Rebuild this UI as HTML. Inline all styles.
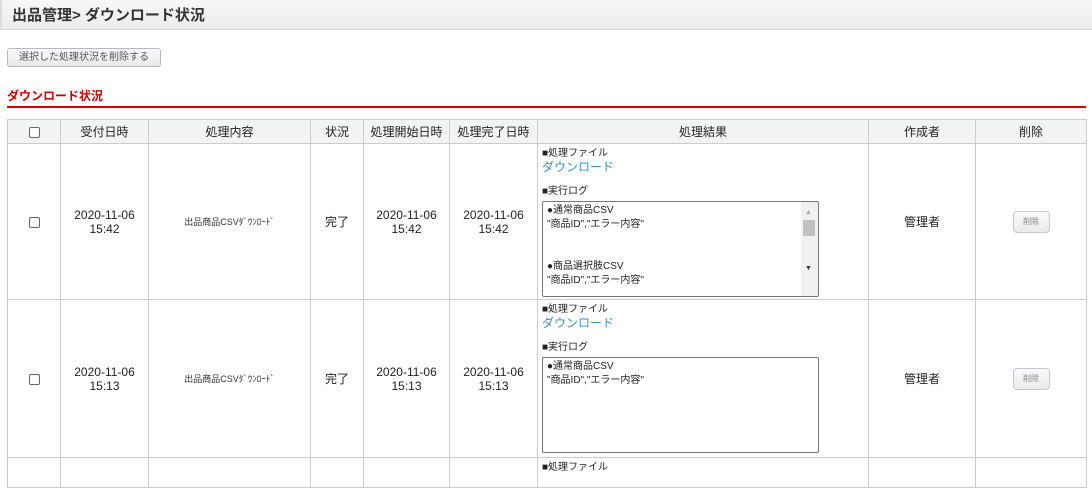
<!DOCTYPE html>
<html><head><meta charset="utf-8"><style>
*{box-sizing:border-box;margin:0;padding:0}
body{width:1092px;height:464px;overflow:hidden;background:#fff;font-family:"Liberation Sans","Noto Sans CJK JP",sans-serif;color:#222;position:relative}
.a{position:absolute}
.title{left:0;top:0;width:1092px;height:30px;background:linear-gradient(#f7f7f7,#ececec);border-bottom:1px solid #d8d8d8;border-left:2px solid #ddd}
.title span{position:absolute;left:10px;top:4px;font-size:15px;font-weight:bold;color:#333}
.btn{left:7px;top:48px;width:154px;height:19px;border:1px solid #b8b8c0;border-radius:3px;background:linear-gradient(#fafafa,#e8e8e8);font-size:10px;color:#555;text-align:center;line-height:17px}
.sub{left:7px;top:87px;font-size:12px;font-weight:bold;color:#c00}
.red{left:7px;top:106px;width:1079px;height:2px;background:#c00}
table{position:absolute;left:7px;top:119px;border-collapse:collapse;table-layout:fixed}
td,th{border:1px solid #ccc;font-weight:normal;text-align:center;font-size:12px;vertical-align:middle;line-height:14px}
th{background:#f2f4f4;height:24px}
.cb{display:inline-block;width:11px;height:11px;border:1px solid #666;border-radius:2px;background:#fff;vertical-align:middle}
.sm{font-size:9px;color:#333}
.res{text-align:left;vertical-align:top;padding:3px 4px 0 4px;font-size:10px;line-height:13px}
.dl{color:#3a8fd0;font-size:12px;display:block;line-height:15px;margin-bottom:10px}
.ta{width:277px;height:96px;border:1px solid #777;border-radius:2px;margin-top:3px;position:relative;font-size:10px;padding:2px 4px;line-height:14px;overflow:hidden}
.sb{position:absolute;right:0;top:0;width:17px;height:100%;background:#f0f0f0}
.del{display:inline-block;width:37px;height:22px;border:1px solid #c8c8d0;border-radius:4px;background:linear-gradient(#fafafa,#eaeaea);font-size:8px;color:#888;line-height:20px}
</style></head><body>
<div class="a title"><span>出品管理&gt; ダウンロード状況</span></div>
<div class="a btn">選択した処理状況を削除する</div>
<div class="a sub">ダウンロード状況</div>
<div class="a red"></div>
<table>
<colgroup><col style="width:53px"><col style="width:88px"><col style="width:162px"><col style="width:53px"><col style="width:86px"><col style="width:88px"><col style="width:331px"><col style="width:107px"><col style="width:111px"></colgroup>
<tr><th><span class="cb"></span></th><th>受付日時</th><th>処理内容</th><th>状況</th><th>処理開始日時</th><th>処理完了日時</th><th>処理結果</th><th>作成者</th><th>削除</th></tr>
<tr style="height:156px"><td><span class="cb"></span></td><td>2020-11-06<br>15:42</td><td class="sm">出品商品CSVﾀﾞｳﾝﾛｰﾄﾞ</td><td>完了</td><td>2020-11-06<br>15:42</td><td>2020-11-06<br>15:42</td>
<td class="res">■処理ファイル<span class="dl">ダウンロード</span>■実行ログ<div class="ta">●通常商品CSV<br>"商品ID","エラー内容"<br><br><br>●商品選択肢CSV<br>"商品ID","エラー内容"<div class="sb"><div style="position:absolute;left:2px;top:18px;width:12px;height:16px;background:#c1c1c1"></div><div style="position:absolute;left:4px;top:4px;font-size:7px;color:#aaa">▲</div><div style="position:absolute;left:4px;top:60px;font-size:7px;color:#333">▼</div></div></div></td>
<td>管理者</td><td><span class="del">削除</span></td></tr>
<tr style="height:158px"><td><span class="cb"></span></td><td>2020-11-06<br>15:13</td><td class="sm">出品商品CSVﾀﾞｳﾝﾛｰﾄﾞ</td><td>完了</td><td>2020-11-06<br>15:13</td><td>2020-11-06<br>15:13</td>
<td class="res">■処理ファイル<span class="dl">ダウンロード</span>■実行ログ<div class="ta">●通常商品CSV<br>"商品ID","エラー内容"</div></td>
<td>管理者</td><td><span class="del">削除</span></td></tr>
<tr style="height:30px"><td></td><td></td><td></td><td></td><td></td><td></td><td class="res">■処理ファイル</td><td></td><td></td></tr>
</table>
</body></html>
